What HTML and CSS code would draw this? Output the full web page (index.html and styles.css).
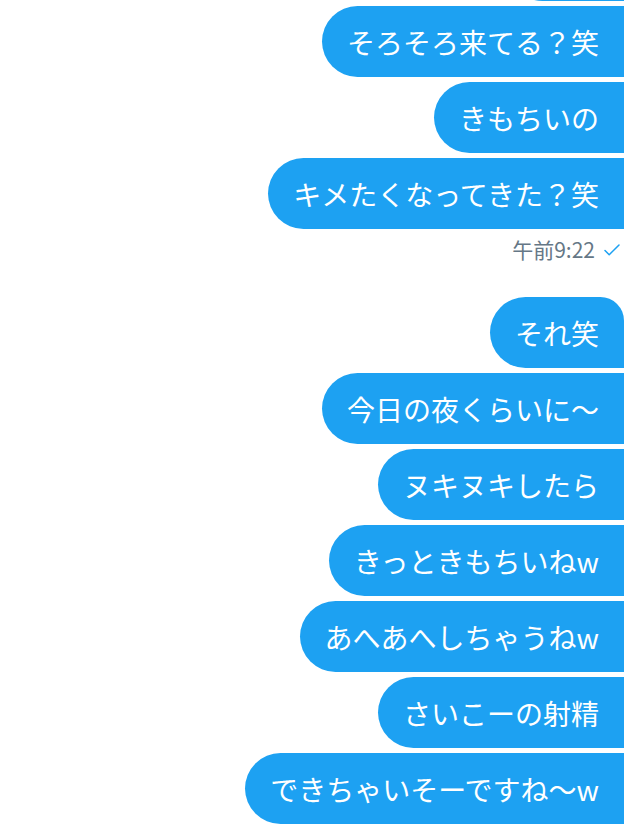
FILE: index.html
```html
<!DOCTYPE html>
<html lang="ja">
<head>
<meta charset="utf-8">
<title>DM</title>
<link rel="stylesheet" href="styles.css">
</head>
<body>
<main class="thread">
  <div class="group group--cut">
    <div class="bubble bubble--partial" aria-hidden="true"></div>
    <div class="bubble">そろそろ来てる？笑</div>
    <div class="bubble">きもちいの</div>
    <div class="bubble">キメたくなってきた？笑</div>
  </div>
  <div class="stamp">
    <span class="stamp__time">午前9:22</span>
    <svg class="stamp__check" width="16" height="12" viewBox="0 0 16 12" aria-hidden="true">
      <polyline points="1,6.5 5.2,10.8 15,1" fill="none" stroke="#1da1f2" stroke-width="1.5" stroke-linecap="round" stroke-linejoin="round"/>
    </svg>
  </div>
  <div class="group group--new">
    <div class="bubble bubble--lead">それ笑</div>
    <div class="bubble">今日の夜くらいに〜</div>
    <div class="bubble">ヌキヌキしたら</div>
    <div class="bubble">きっときもちいねw</div>
    <div class="bubble">あへあへしちゃうねw</div>
    <div class="bubble">さいこーの射精</div>
    <div class="bubble">できちゃいそーですね〜w</div>
  </div>
</main>
</body>
</html>
```

FILE: styles.css
```css
html, body {
  margin: 0;
  padding: 0;
  background: #ffffff;
}

body {
  width: 639px;
  height: 827px;
  overflow: hidden;
  font-family: "Noto Sans CJK JP", "Noto Sans", sans-serif;
}

.thread {
  display: flex;
  flex-direction: column;
  padding-right: 15px;
}

.group {
  display: flex;
  flex-direction: column;
  align-items: flex-end;
  gap: 5px;
}

.group--cut {
  margin-top: -70px;
}

.group--new {
  margin-top: 36px;
}

.bubble {
  box-sizing: border-box;
  height: 71px;
  padding: 0 25px;
  display: flex;
  align-items: center;
  background: #1da1f2;
  color: #ffffff;
  font-size: 28px;
  line-height: 1;
  white-space: nowrap;
  border-radius: 36px 0 0 36px;
}

.bubble--partial {
  width: 117px;
}

.bubble--lead {
  border-top-right-radius: 24px;
}

.stamp {
  align-self: flex-end;
  display: flex;
  align-items: center;
  gap: 9px;
  height: 24px;
  margin: 8px 4px 0 0;
  color: #657786;
  font-size: 21px;
  line-height: 24px;
}

.stamp__check {
  display: block;
  margin-top: 1px;
}
```
